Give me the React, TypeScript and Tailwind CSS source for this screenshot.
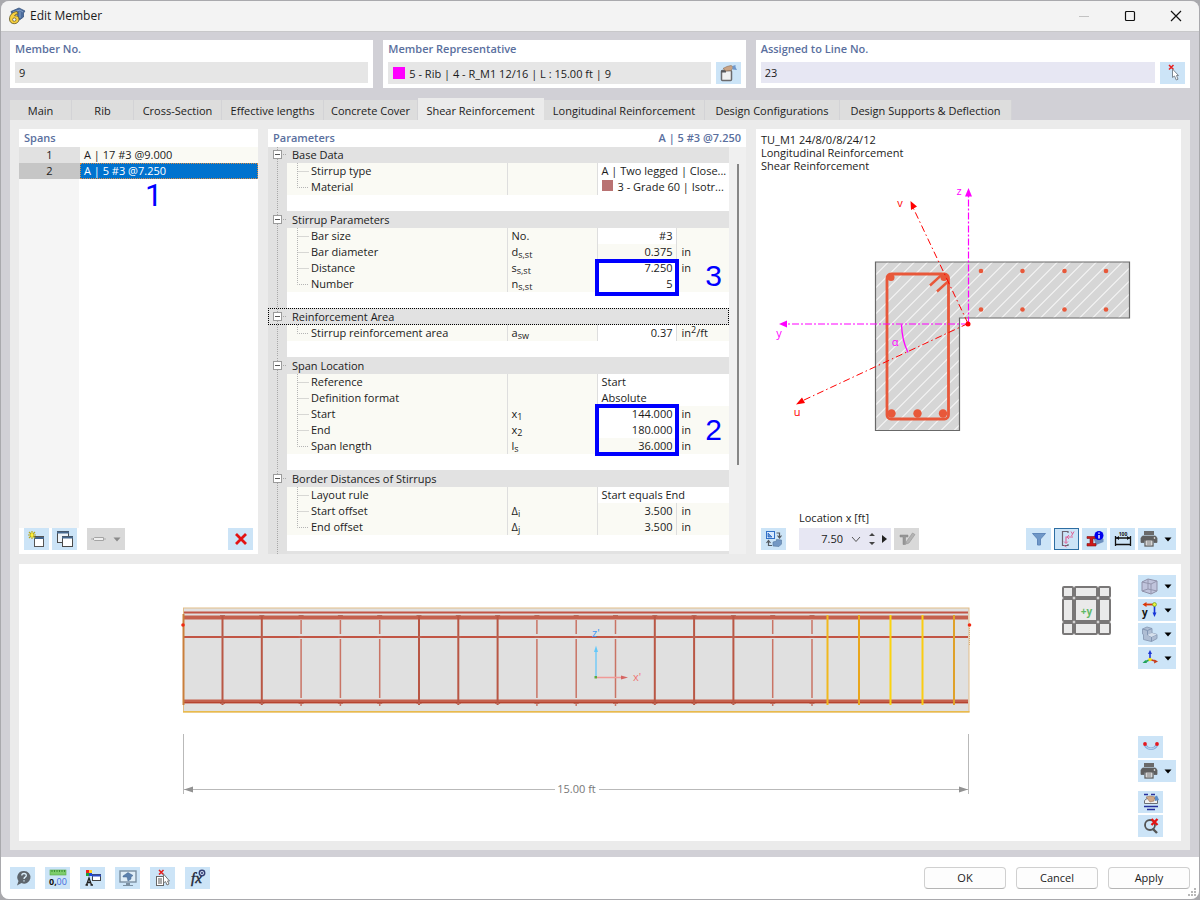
import React from "react";

type Kids = { children?: React.ReactNode };

const Svg = ({ children, w = 20 }: Kids & { w?: number }) => (
  <svg viewBox={`0 0 ${w} 18`} width={w} height={18} fill="none" aria-hidden="true">
    {children}
  </svg>
);

function ToolButton({
  label,
  menu = false,
  tone = "blue",
  children,
}: Kids & { label: string; menu?: boolean; tone?: "blue" | "gray" | "active" }) {
  const tones = {
    blue: "bg-[#cce4f7]",
    gray: "bg-[#d9d9d9]",
    active: "bg-[#cce4f7] outline outline-1 -outline-offset-1 outline-[#2d6ea3]",
  };
  return (
    <button
      type="button"
      aria-label={label}
      className={`flex h-[22px] shrink-0 items-center ${tones[tone]} ${menu ? "w-[38px] justify-between pl-0.5 pr-1" : "w-[25px] justify-center"}`}
    >
      {children}
      {menu && (
        <svg viewBox="0 0 8 5" width="8" height="5" aria-hidden="true">
          <path d="M0.5 0.5H7.5L4 4.5Z" fill={tone === "gray" ? "#8a8a8a" : "#000"} />
        </svg>
      )}
    </button>
  );
}

const AppLogo = () => (
  <svg viewBox="0 0 18 18" width="18" height="18" aria-hidden="true">
    <path d="M3 4.500L11 1L17 4L15.500 6V10L11.500 13L9 7L4 7Z" fill="#4b6c9e" stroke="#38557f" strokeWidth=".8" />
    <path d="M5 5L12 3L15 5M12 4.500V11" stroke="#86a2c8" fill="none" />
    <path d="M9 4.500C4 5 1.500 8.500 1.500 12C1.500 15 3.500 16.700 6.200 16.700C9 16.700 11 14.800 11 12.300C11 9.800 9 8.300 6.500 8.800C7.200 7.500 8.500 7 10 6.800Z" fill="#f7cf3c" stroke="#6e6430" strokeWidth=".9" />
    <circle cx="6.300" cy="12.600" r="1.700" fill="#f3f3f3" stroke="#6e6430" strokeWidth=".8" />
  </svg>
);

const LibraryIcon = () => (
  <Svg>
    <rect x="3.500" y="6.500" width="10" height="10" rx="1" fill="#f1f1f1" stroke="#6b6b6e" strokeWidth="1.500" />
    <path d="M3 7.500H8" stroke="#59595c" strokeWidth="2" />
    <path d="M5 4.500L9 2.500L13 1.500L15.500 3L13 6.500L8 7Z" fill="#c9a384" stroke="#8b6d55" strokeWidth=".6" />
    <path d="M14.500 2L17.500 1V3L19 6L14.500 5.500Z" fill="#6d97cb" />
  </Svg>
);
const PickIcon = () => (
  <Svg>
    <path d="M6 1L10.500 5.500M10.500 1L6 5.500" stroke="#e82020" strokeWidth="1.500" />
    <path d="M9.500 5V13.500L11.500 12L13.300 16L15 15.200L13.500 11.500H15.500Z" fill="#fff" stroke="#7c8791" />
  </Svg>
);
const NewIcon = () => (
  <Svg>
    <rect x="7.500" y="6.500" width="9" height="10" fill="#fff" stroke="#555" />
    <path d="M7 8H17" stroke="#43658d" strokeWidth="2" />
    <path d="M5 1V9M1 5H9M2 2L8 8M8 2L2 8" stroke="#b5a81c" strokeWidth="1.200" />
    <path d="M5 2L6.500 5L5 8L3.500 5Z" fill="#ffef35" />
  </Svg>
);
const CopyIcon = () => (
  <Svg>
    <rect x="2.500" y="1.500" width="11" height="11" fill="#eff5fa" stroke="#4a4a4a" />
    <path d="M2 2.500H14" stroke="#47698f" strokeWidth="2" />
    <rect x="7.500" y="6.500" width="10" height="10" fill="#fff" stroke="#4a4a4a" />
    <path d="M7 7.500H18" stroke="#47698f" strokeWidth="2" />
  </Svg>
);
const LinkIcon = () => (
  <Svg>
    <path d="M2 9H6M14 9H17" stroke="#b0b0b0" strokeWidth="1.200" />
    <path d="M5.500 7.500H14.500V10.500H5.500L4 9Z" fill="#eee" stroke="#a4a4a4" />
  </Svg>
);
const DeleteIcon = () => (
  <Svg>
    <path d="M5 4L15 14M15 4L5 14" stroke="#e31313" strokeWidth="2.800" />
  </Svg>
);
const SwapIcon = () => (
  <Svg>
    <rect x="2.500" y="1.500" width="8" height="7" fill="#d8eaff" stroke="#3170c7" />
    <path d="M4 7V3L8 7Z" fill="#5b8fd6" stroke="#2362bd" strokeWidth=".7" />
    <path d="M12.500 3H15.500V7.500M13.500 5.500L15.500 8L17.500 5.500M8 15.500H4.500V11M2.500 13L4.500 10.500L6.500 13" stroke="#555b62" strokeWidth="1.200" />
    <path d="M9 12L12.500 11V9.500L17.500 10V14L15 16.500L9 16Z" fill="#7498c4" stroke="#55799f" strokeWidth=".6" />
  </Svg>
);
const EditSectionIcon = () => (
  <Svg>
    <path d="M3 5H11V7H8.500V14.500H6V7H3Z" fill="#979797" stroke="#858585" strokeWidth=".5" />
    <path d="M9.500 11.500L15.500 3L18 4.500L12 13L9.500 14Z" fill="#b3b3b3" stroke="#949494" strokeWidth=".6" />
  </Svg>
);
const FilterIcon = () => (
  <Svg>
    <path d="M3.500 3.500H16.500L11.500 9V15H8.500V9Z" fill="#6f97c7" stroke="#5f87ba" />
  </Svg>
);
const SectionAxesIcon = () => (
  <Svg>
    <path d="M11 3V1.500H5.500V15.500H11V14" stroke="#6b6370" strokeWidth="1.200" />
    <path d="M16 7H9V13" stroke="#e0669a" strokeWidth="1.200" />
    <path d="M12 5L10 7L12 9M7 11.500L9 13.500L11 11.500" stroke="#e0669a" />
    <path d="M14 1.500L15.500 4M17 1.500L14.500 6M7 15.500L9.500 17" stroke="#df6296" />
  </Svg>
);
const InfoIcon = () => (
  <Svg>
    <path d="M8 7L13 5L18.500 9V12L11 15Z" fill="#6d8fbf" />
    <path d="M2 6.500H11V8.500H8V13.500H11V16H2V13.500H5V8.500H2Z" fill="#d11818" stroke="#7d1414" strokeWidth=".6" />
    <circle cx="14" cy="5.500" r="4.500" fill="#0000ed" />
    <path d="M14 5V8.500M14 2.500V3.800" stroke="#fff" strokeWidth="1.400" />
  </Svg>
);
const DimensionIcon = () => (
  <Svg>
    <path d="M2.500 6V16M17.500 6V16M2 14.500H18M3 8H17" stroke="#111" strokeWidth="1.300" />
    <path d="M3 8L6 6V10ZM17 8L14 6V10Z" fill="#111" />
    <text x="10" y="5.500" fontSize="5" textAnchor="middle" fill="#111" fontWeight="700">100</text>
  </Svg>
);
const PrintIcon = () => (
  <Svg w={18}>
    <path d="M4 1H14V5H4Z" fill="#6a6a6a" />
    <path d="M2.500 6H15.500L17 8V12.500H14V10H4V12.500H1V8Z" fill="#5f5f5f" stroke="#5f5f5f" strokeWidth=".8" />
    <rect x="5" y="10" width="8" height="6" fill="#fff" stroke="#5f5f5f" strokeWidth="1.300" />
    <path d="M6.500 12H11.500M6.500 14H11.500" stroke="#5f5f5f" />
    <circle cx="14.500" cy="8" r=".8" fill="#fff" />
  </Svg>
);
const CubeIcon = () => (
  <Svg>
    <path d="M2 5L8 2L17 4V14L11 17L2 14Z" fill="#c0c4dc" stroke="#8f90a8" />
    <path d="M2 5L11 7L17 4M11 7V17M8 2V12L2 14M8 12L17 14" stroke="#9496ae" />
  </Svg>
);
const AxisYIcon = () => (
  <Svg>
    <path d="M6 3.500H13" stroke="#db3708" strokeWidth="1.800" />
    <path d="M2.500 3.500L6.500 1V6Z" fill="#db3708" />
    <path d="M14.500 5V12" stroke="#1635d8" strokeWidth="1.600" />
    <path d="M12.500 11.500L14.500 16L16.500 11.500Z" fill="#1635d8" />
    <circle cx="14.500" cy="3.500" r="1.900" fill="#eef43c" stroke="#6ca522" strokeWidth=".8" />
    <text x="2" y="15" fontSize="10" fontWeight="700" fill="#111">y</text>
  </Svg>
);
const StepsIcon = () => (
  <Svg>
    <path d="M2.500 4L7 2L12 3.500V8L17 9.500V13.500L11.500 16.500L3.500 14.500V9.500L2.500 9Z" fill="#aebdd3" stroke="#8ea0ba" />
    <path d="M2.500 4L7.500 5.500L12 3.500M7.500 5.500V10L11.500 12L17 9.500M11.500 12V16.500" stroke="#8296b3" />
    <path d="M7.500 10L12 8L17 9.500L11.500 12Z" fill="#d6e0ec" />
  </Svg>
);
const TriadIcon = () => (
  <Svg>
    <path d="M10 10V4" stroke="#1c36d2" strokeWidth="1.600" />
    <path d="M8 5L10 1L12 5Z" fill="#1c36d2" />
    <path d="M10 10.500L6 12.500" stroke="#21a35b" strokeWidth="1.600" />
    <path d="M2.500 14L5.500 11L7 14Z" fill="#21a35b" />
    <path d="M10 10.500L15 12" stroke="#c83c1c" strokeWidth="1.600" />
    <path d="M18 12.500L14 14.500L14.500 10.500Z" fill="#c83c1c" />
    <circle cx="10" cy="10.500" r="1.800" fill="#f2e516" />
  </Svg>
);
const CurveIcon = () => (
  <Svg>
    <path d="M4 7C7 12 13 12 16 7" stroke="#85addb" strokeWidth="2.600" />
    <path d="M4 7C7 12 13 12 16 7" stroke="#c4dcf3" />
    <circle cx="4" cy="6" r="1.900" fill="#e5181f" />
    <circle cx="16" cy="6" r="1.900" fill="#e5181f" />
  </Svg>
);
const LayersIcon = () => (
  <Svg>
    <path d="M3 1.500H7M10 1.500H14M3 13.500H17M6 16.500H14" stroke="#26309c" strokeWidth="1.500" />
    <path d="M3.500 10.500V7.500L6 5.500H16.500V10.500Z" fill="#f1f1f1" stroke="#6a6f75" />
    <path d="M5 4L9 3L14 4L13 8L9 9Z" fill="#cfa98a" stroke="#8e6b51" strokeWidth=".5" />
    <path d="M14 3.500L16 2.500L18 7L14 8Z" fill="#5a8cc8" />
  </Svg>
);
const ZoomResetIcon = () => (
  <Svg>
    <circle cx="9" cy="8" r="5" stroke="#555" strokeWidth="1.800" />
    <path d="M11.500 11.500L16 16" stroke="#555" strokeWidth="2.400" />
    <path d="M10.500 2L16.500 8M16.500 2L10.500 8" stroke="#e31414" strokeWidth="2.400" />
  </Svg>
);
const HelpIcon = () => (
  <Svg>
    <path d="M11 2A6.300 6.300 0 1 1 8.500 14L4 16.500L5.500 12A6.300 6.300 0 0 1 11 2Z" fill="#5d656c" />
    <path d="M8.800 6.500C8.800 3.800 13.300 3.800 13.300 6.500C13.300 8.300 11 8 11 10M11 11.200V12.500" stroke="#d9edf9" strokeWidth="1.300" />
  </Svg>
);
const UnitsIcon = () => (
  <Svg>
    <rect x="2" y="1" width="16" height="5" fill="#7dcd6b" stroke="#55a948" strokeWidth=".6" />
    <path d="M4 1V3M6.500 1V3M9 1V3M11.500 1V3M14 1V3M16.500 1V3" stroke="#3d8e35" />
    <text x="1" y="16" fontSize="9" fill="#111" fontWeight="700">0,</text>
    <text x="8.500" y="16" fontSize="9" fill="#3e6bdc">00</text>
  </Svg>
);
const ColorsIcon = () => (
  <Svg>
    <path d="M3 1H6V4H3Z" fill="#e22" />
    <path d="M6 1H9V4H6Z" fill="#ffd21d" />
    <path d="M3 4H6V7H3Z" fill="#1e9f38" />
    <path d="M6 4H9V7H6Z" fill="#1d45d6" />
    <path d="M3.500 16L6 9L8.500 16M4.500 13.500H7.500M2.500 16H5M7.500 16H10" stroke="#222" strokeWidth="1.300" />
    <rect x="9.500" y="5.500" width="8" height="6" fill="#fff" stroke="#444" />
    <path d="M9 6.500H18" stroke="#2b4bc4" strokeWidth="2" />
  </Svg>
);
const ScreenIcon = () => (
  <Svg>
    <rect x="2" y="2" width="16" height="11" fill="#dfedf7" stroke="#7b8fa1" strokeWidth="1.400" />
    <path d="M8 14H12V16H15V17H5V16H8Z" fill="#7b8fa1" />
    <path d="M5 7L10 3.500L15 6.500L13 8V10L10 12L9 8H5Z" fill="#5c81ae" stroke="#45678f" strokeWidth=".5" />
  </Svg>
);
const ListPickIcon = () => (
  <Svg>
    <rect x="3.500" y="7.500" width="7" height="9" fill="#fff" stroke="#666" />
    <path d="M5 10H9M5 12H9M5 14H9" stroke="#555" />
    <path d="M6 1L10.500 5.500M10.500 1L6 5.500" stroke="#e31b1b" strokeWidth="1.500" />
    <path d="M10.500 5V14L12.500 12.500L14 16L16 15L14.500 12H16.500Z" fill="#fff" stroke="#777" />
  </Svg>
);
const FormulaIcon = () => (
  <Svg>
    <text x="3" y="14" fontSize="15" fontStyle="italic" fontFamily="Liberation Serif" fill="#1c2636" stroke="#1c2636" strokeWidth=".4">fx</text>
    <circle cx="14" cy="4" r="2.700" fill="#dce6fa" stroke="#343f73" strokeWidth="1.500" />
    <circle cx="14" cy="4" r="1.100" fill="#343f73" />
  </Svg>
);

const Heading = ({ children }: Kids) => <h2 className="font-semibold text-[#5a6f9e]">{children}</h2>;

const tabs = [
  { name: "Main", width: "w-[62px]" },
  { name: "Rib", width: "w-[62px]" },
  { name: "Cross-Section", width: "w-[88px]" },
  { name: "Effective lengths", width: "w-[102px]" },
  { name: "Concrete Cover", width: "w-[94px]" },
  { name: "Shear Reinforcement", width: "w-[126px]" },
  { name: "Longitudinal Reinforcement", width: "w-[161px]" },
  { name: "Design Configurations", width: "w-[135px]" },
  { name: "Design Supports & Deflection", width: "w-[172px]" },
];

type Row = {
  name: string;
  base?: string;
  sub?: string;
  value: string;
  unit?: React.ReactNode;
  wide?: boolean;
  editable?: boolean;
  swatch?: boolean;
};

const sections: { title: string; focused?: boolean; rows: Row[] }[] = [
  {
    title: "Base Data",
    rows: [
      { name: "Stirrup type", value: "A | Two legged | Close...", wide: true },
      { name: "Material", value: "3 - Grade 60 | Isotr...", wide: true, swatch: true },
    ],
  },
  {
    title: "Stirrup Parameters",
    rows: [
      { name: "Bar size", base: "No.", value: "#3", editable: true },
      { name: "Bar diameter", base: "d", sub: "s,st", value: "0.375", unit: "in" },
      { name: "Distance", base: "s", sub: "s,st", value: "7.250", unit: "in", editable: true },
      { name: "Number", base: "n", sub: "s,st", value: "5", editable: true },
    ],
  },
  {
    title: "Reinforcement Area",
    focused: true,
    rows: [
      {
        name: "Stirrup reinforcement area", base: "a", sub: "sw", value: "0.37", editable: true,
        unit: <>in<sup className="text-[9px]">2</sup>/ft</>,
      },
    ],
  },
  {
    title: "Span Location",
    rows: [
      { name: "Reference", value: "Start", wide: true },
      { name: "Definition format", value: "Absolute", wide: true },
      { name: "Start", base: "x", sub: "1", value: "144.000", unit: "in", editable: true },
      { name: "End", base: "x", sub: "2", value: "180.000", unit: "in", editable: true },
      { name: "Span length", base: "l", sub: "s", value: "36.000", unit: "in" },
    ],
  },
  {
    title: "Border Distances of Stirrups",
    rows: [
      { name: "Layout rule", value: "Start equals End", wide: true },
      { name: "Start offset", base: "Δ", sub: "i", value: "3.500", unit: "in" },
      { name: "End offset", base: "Δ", sub: "j", value: "3.500", unit: "in" },
    ],
  },
];

function Branch({ last }: { last: boolean }) {
  return (
    <svg width="24" height="16" className="shrink-0" aria-hidden="true">
      <path d={last ? "M10.5 0V8.5H22" : "M10.5 0V16M10.5 8.500H22"} stroke="#b4b4b4" strokeDasharray="1 1" fill="none" />
    </svg>
  );
}

function Gutter({ toggle = false }: { toggle?: boolean }) {
  return (
    <td className="bg-[#e1e1e1] p-0">
      <svg width="19" height="16" className="block" aria-hidden="true">
        <path d="M9.500 0V16" stroke="#a8a8a8" strokeDasharray="1 1" />
        {toggle && (
          <>
            <rect x="5.500" y="3.500" width="8" height="8" fill="#fff" stroke="#9b9b9b" />
            <path d="M7 7.500H12" stroke="#555" />
            <path d="M15 7.500H19" stroke="#a8a8a8" strokeDasharray="1 1" />
          </>
        )}
      </svg>
    </td>
  );
}

function ParameterTable() {
  return (
    <table className="w-full table-fixed border-collapse">
      <colgroup>
        <col className="w-[19px]" />
        <col />
        <col className="w-[90px]" />
        <col className="w-[79px]" />
        <col className="w-[53px]" />
      </colgroup>
      {sections.map((s, n) => (
        <tbody key={s.title}>
          <tr
            className={`bg-[#e2e2e2] ${n === 0 ? "h-4" : "h-[17px]"} ${s.focused ? "outline-1 -outline-offset-1 outline-dotted outline-black" : ""}`}
          >
            <Gutter toggle />
            <th colSpan={4} scope="rowgroup" className="p-0 pl-[5px] text-left font-medium">{s.title}</th>
          </tr>
          {s.rows.map((r, i) => (
            <tr key={r.name} className="h-4 bg-[#fafaf4]">
              <Gutter />
              <td className="p-0">
                <div className="flex h-4 items-center"><Branch last={i === s.rows.length - 1} />{r.name}</div>
              </td>
              <td className="border-l border-[#dedede] p-0 pl-1">
                {r.base}
                {r.sub && <sub className="text-[9px]">{r.sub}</sub>}
              </td>
              {r.wide ? (
                <td colSpan={2} className="whitespace-nowrap border-l border-[#dedede] bg-white p-0 pl-1">
                  {r.swatch && <span className="mr-[5px] inline-block size-[11px] bg-[#b97272]" />}
                  {r.value}
                </td>
              ) : (
                <>
                  <td className={`border-l border-[#dedede] p-0 pr-[3px] text-right ${r.editable ? "bg-white" : ""}`}>{r.value}</td>
                  <td className="border-l border-[#dedede] p-0 pl-[5px]">{r.unit}</td>
                </>
              )}
            </tr>
          ))}
          <tr className="h-4"><Gutter /><td colSpan={4} className="p-0" /></tr>
        </tbody>
      ))}
      <tbody>
        <tr className="h-4 bg-[#e2e2e2]"><Gutter /><td colSpan={4} className="p-0" /></tr>
      </tbody>
    </table>
  );
}

function SectionDrawing() {
  return (
    <svg viewBox="756 173 425 335" className="min-h-0 w-full flex-1" role="img" aria-label="Cross-section with reinforcement">
      <defs>
        <clipPath id="concrete">
          <path d="M875.5 261.500H1129.500V317.500H959.500V430H875.500Z" />
        </clipPath>
      </defs>
      <path d="M875.5 261.500H1129.500V317.500H959.500V430H875.500Z" fill="#d6d6d6" />
      <g clipPath="url(#concrete)" stroke="#f6f6f6" strokeWidth="1.100">
        {Array.from({ length: 36 }, (_, i) => 890 + i * 13).map((x) => (
          <path key={x} d={`M${x} 260L${x - 172} 432`} />
        ))}
      </g>
      <path d="M875.5 261.500H1129.500V317.500H959.500V430H875.500Z" fill="none" stroke="#686868" strokeWidth="1.200" />
      <g stroke="#e8583a" fill="none">
        <rect x="887" y="273.500" width="61.500" height="145" rx="4" strokeWidth="2.800" />
        <path d="M930 285L942 274M937 291L948 281" strokeWidth="2.400" />
      </g>
      <g fill="#e8583a">
        {[[891, 277], [944, 277], [891.5, 413], [917.5, 413], [943, 413]].map(([x, y]) => (
          <circle key={`${x}-${y}`} cx={x} cy={y} r={y > 300 ? 4.200 : 3.500} />
        ))}
        {[981, 1022.5, 1064.5, 1106].map((x) => (
          <React.Fragment key={x}><circle cx={x} cy="270.500" r="2.300" /><circle cx={x} cy="309" r="2.300" /></React.Fragment>
        ))}
      </g>
      <g stroke="#ff00ff" strokeWidth="1.200" fill="none">
        <path d="M968.5 323V195M968 323.500H786" strokeDasharray="7 2 2 2" />
        <path d="M901.500 324Q902 340 908 352" strokeWidth="1.300" />
      </g>
      <path d="M968.500 187.500L965 196H972ZM779 323.500L787 320V327Z" fill="#f0f" />
      <path d="M968 323L913 207M968 323L803 400" stroke="#f00" strokeDasharray="7 3 1.500 3" />
      <path d="M910.500 200.500L917 206L911 209.500ZM796 404L802 397L805 402.500Z" fill="#f00" />
      <circle cx="968" cy="323.500" r="2.500" fill="#f00" />
      <g fontSize="11" textAnchor="middle" fontWeight="500">
        <text x="959" y="194" fill="#f0f">z</text>
        <text x="779" y="336" fill="#f0f">y</text>
        <text x="895" y="345" fill="#f0f">α</text>
        <text x="900" y="206" fill="#f00">v</text>
        <text x="797" y="415" fill="#f00">u</text>
      </g>
    </svg>
  );
}

const stirrups = Array.from({ length: 16 }, (_, i) => ({
  x: 222.5 + i * 39.3,
  front: [0, 1, 5, 6, 7, 11, 12, 13].includes(i),
}));
const selectedStirrups = [
  { x: 827.5, color: "#f1b81f" },
  { x: 859, color: "#e9a61c" },
  { x: 890.5, color: "#fbd310" },
  { x: 922.5, color: "#fbcc13" },
  { x: 954, color: "#dfa12a" },
];

function BeamDrawing() {
  return (
    <svg viewBox="19 564 1031 277" className="h-full min-w-0 flex-1" role="img" aria-label="Side view of the rib, 15.00 ft">
      <rect x="183.500" y="608" width="785.500" height="104" fill="#e0e0e0" stroke="#e2bd88" />
      <path d="M183 711.800H969.500" stroke="#e9bb4c" strokeWidth="1.500" />
      <path d="M184 612.500H968M184 637H968" stroke="#c25545" strokeWidth="2" />
      <path d="M184 617.500H968M184 701.500H968" stroke="#c4604d" strokeWidth="3.800" />
      <path d="M184 702.500H968" stroke="#b5432f" strokeWidth="1.200" />
      <path d="M183.500 614V705" stroke="#ca7f3b" strokeWidth="2" />
      {stirrups.map(({ x, front }) => (
        <g key={x}>
          {front ? (
            <path d={`M${x} 615V705`} stroke="#b95745" strokeWidth="2" />
          ) : (
            <path d={`M${x} 620V634M${x} 639V698M${x} 703V706`} stroke="#c97465" strokeWidth="1.500" />
          )}
          <path d={`M${x - 2.5} 637H${x + 2.5}M${x - 2.5} 615.500H${x + 2.5}M${x - 2.5} 703.500H${x + 2.5}`} stroke="#b96a5c" />
        </g>
      ))}
      {selectedStirrups.map(({ x, color }) => (
        <path key={x} d={`M${x} 615V705`} stroke={color} strokeWidth="2" />
      ))}
      <circle cx="183" cy="625" r="1.800" fill="#f02a13" />
      <circle cx="969.500" cy="625" r="1.800" fill="#f02a13" />
      <path d="M969.500 628V645" stroke="#d9ae78" strokeDasharray="1 1" />
      <path d="M596 677V651" stroke="#76cbf7" strokeWidth="1.500" />
      <path d="M594 652L596 645.500L598 652Z" fill="#62c8fa" />
      <path d="M597 677.500H623" stroke="#f19a97" strokeWidth="1.500" />
      <path d="M621 675.500L628 677.500L621 679.500Z" fill="#d56562" />
      <rect x="594.500" y="676" width="2.500" height="2.500" fill="#5eaa3f" />
      <text x="592" y="637" fontSize="11" fill="#4096f4">z'</text>
      <text x="633" y="681" fontSize="11" fill="#ef7772">x'</text>
      <path d="M183.500 734V794M968.500 734V794M184 789.500H555M599 789.500H968" stroke="#b9b9b9" />
      <path d="M184 789.500L193 786.500V792.500ZM968 789.500L959 786.500V792.500Z" fill="#929292" />
      <text x="576.500" y="793" fontSize="11" textAnchor="middle" fill="#777" fontWeight="500">15.00 ft</text>
    </svg>
  );
}

function ViewCube() {
  const spans = [[1, 10], [13, 22], [37, 11]];
  return (
    <svg viewBox="0 0 49 49" width="49" height="49" className="mt-[22px] shrink-0" role="img" aria-label="View direction +y">
      {spans.map(([y, h]) => spans.map(([x, w]) => (
        <rect key={`${x}-${y}`} x={x} y={y} width={w} height={h} rx="1" fill="#eaeaea" stroke="#797777" strokeWidth="2" />
      )))}
      <text x="24.500" y="29" fontSize="10" fontWeight="700" textAnchor="middle" fill="#5fb865">+y</text>
    </svg>
  );
}

const Callout = ({ children }: Kids) => (
  <span className="block font-['Liberation_Sans',sans-serif] text-[30px] leading-[30px] text-[#0000ff]">{children}</span>
);

const panel = "h-12 bg-white px-[5px] pt-px";
const panelLabel = "block h-[21px] font-semibold text-[#5a6f9e]";
const field = "h-[21px] w-full min-w-0 flex-1 bg-[#e6e6e6] px-1 outline-none";
const dialogButton =
  "h-[22px] w-[82px] rounded-[4px] border border-[#d0d0d0] border-b-[#b5b5b5] bg-[#fdfdfd] font-medium";

export default function App() {
  return (
    <div className="flex min-h-screen flex-col bg-[#a9a9ad] px-px pb-0.5 pt-px font-['Open_Sans','Noto_Sans',sans-serif] text-[11px] leading-4 text-[#1b1b1b]">
      <div className="flex flex-1 flex-col overflow-hidden rounded-lg bg-[#d1d0d6]">
        <header className="flex h-[31px] items-center border-b border-[#c8c8ca] bg-[#f3f3f3] pl-[7px]">
          <AppLogo />
          <h1 className="ml-1 flex-1 text-xs">Edit Member</h1>
          <button type="button" aria-label="Minimize" className="flex w-[46px] justify-center">
            <svg width="12" height="12"><path d="M1 6.500H11" stroke="#c2c2c2" /></svg>
          </button>
          <button type="button" aria-label="Maximize" className="flex w-[46px] justify-center">
            <svg width="12" height="12"><rect x="1.500" y="1.500" width="9" height="9" rx="1" fill="none" stroke="#111" strokeWidth="1.200" /></svg>
          </button>
          <button type="button" aria-label="Close" className="flex w-[46px] justify-center">
            <svg width="12" height="12"><path d="M1 1L11 11M11 1L1 11" stroke="#111" strokeWidth="1.200" /></svg>
          </button>
        </header>

        <main className="flex flex-1 flex-col px-[9px] pb-[7px] pt-2">
          <div className="grid grid-cols-[363fr_362fr_434fr] gap-2.5">
            <section className={panel}>
              <label htmlFor="member" className={panelLabel}>Member No.</label>
              <div className="flex"><input id="member" readOnly defaultValue="9" className={field} /></div>
            </section>
            <section className={panel}>
              <label htmlFor="rep" className={panelLabel}>Member Representative</label>
              <div className="flex gap-[5px]">
                <div className="flex min-w-0 flex-1 items-center bg-[#e6e6e6] pl-[5px]">
                  <span className="size-3 bg-[#ff00ff]" />
                  <input id="rep" readOnly defaultValue="5 - Rib | 4 - R_M1 12/16 | L : 15.00 ft | 9" className={field} />
                </div>
                <ToolButton label="Edit representative"><LibraryIcon /></ToolButton>
              </div>
            </section>
            <section className={panel}>
              <label htmlFor="line" className={panelLabel}>Assigned to Line No.</label>
              <div className="flex gap-[5px]">
                <input id="line" defaultValue="23" className="h-[21px] w-full min-w-0 flex-1 bg-[#e7e7f3] px-1 outline-none" />
                <ToolButton label="Pick line"><PickIcon /></ToolButton>
              </div>
            </section>
          </div>

          <div role="tablist" className="mt-2.5 flex h-[22px] items-end">
            {tabs.map(({ name, width }) => (
              <button
                key={name}
                type="button"
                role="tab"
                aria-selected={name === "Shear Reinforcement"}
                className={`whitespace-nowrap border-r font-medium ${width} ${name === "Shear Reinforcement" ? "h-[22px] border-[#ebebeb] bg-[#ebebeb] pt-1" : "h-5 border-[#d3d3d6] bg-[#dddddd] pt-0.5"}`}
              >
                {name}
              </button>
            ))}
          </div>

          <div className="flex flex-1 flex-col gap-2.5 bg-[#ebebeb] p-[9px]">
            <div className="grid h-[425px] grid-cols-[239fr_478fr_425fr] gap-2.5">
              <section className="relative flex flex-col bg-[linear-gradient(to_right,#f5f5f5_60px,#ffffff_60px)]">
                <div className="h-[18px] bg-white pl-[5px] pt-px"><Heading>Spans</Heading></div>
                <table className="w-full table-fixed border-collapse">
                  <colgroup><col className="w-[61px]" /><col /></colgroup>
                  <tbody>
                    <tr className="h-4">
                      <th scope="row" className="bg-[#e1e1e1] p-0 font-medium">1</th>
                      <td className="bg-[#fafaf4] p-0 pl-1">A | 17 #3 @9.000</td>
                    </tr>
                    <tr className="h-4">
                      <th scope="row" className="bg-[#c6c6c6] p-0 font-medium">2</th>
                      <td className="bg-[#0072ce] p-0 pl-1 text-white outline-1 -outline-offset-1 outline-dotted outline-[#d98b45]">A | 5 #3 @7.250</td>
                    </tr>
                  </tbody>
                </table>
                <div className="absolute left-[126px] top-[52px]">
                  <span className="block font-['Roboto',sans-serif] text-[31px] leading-[30px] text-[#0000ff]">1</span>
                </div>
                <div className="mt-auto flex items-center gap-[3px] bg-white px-[5px] pb-1">
                  <ToolButton label="New span"><NewIcon /></ToolButton>
                  <ToolButton label="Copy span"><CopyIcon /></ToolButton>
                  <span className="ml-[7px]"><ToolButton label="Connect" menu tone="gray"><LinkIcon /></ToolButton></span>
                  <span className="ml-auto"><ToolButton label="Delete span"><DeleteIcon /></ToolButton></span>
                </div>
              </section>

              <section className="relative flex min-h-0 flex-col bg-white">
                <div className="flex h-[18px] shrink-0 justify-between px-[5px] pt-px">
                  <Heading>Parameters</Heading>
                  <Heading>A | 5 #3 @7.250</Heading>
                </div>
                <div className="flex min-h-0 flex-1 overflow-hidden">
                  <div className="min-w-0 flex-1"><ParameterTable /></div>
                  <div className="w-[17px] bg-[#f0f0f0] pl-2 pt-[17px]"><div className="h-[301px] w-0.5 bg-[#868686]" /></div>
                </div>
                <div className="absolute right-[67px] top-[130px] h-[37px] w-[84px] border-4 border-[#0000ff]" />
                <div className="absolute right-[67px] top-[275px] h-[52px] w-[84px] border-4 border-[#0000ff]" />
                <div className="absolute right-6 top-[132px]"><Callout>3</Callout></div>
                <div className="absolute right-6 top-[286px]"><Callout>2</Callout></div>
              </section>

              <section className="flex min-h-0 flex-col bg-white">
                <div className="px-[5px] pt-1 leading-[13px]">
                  <p>TU_M1 24/8/0/8/24/12</p>
                  <p>Longitudinal Reinforcement</p>
                  <p>Shear Reinforcement</p>
                </div>
                <SectionDrawing />
                <div className="flex items-end gap-[3px] px-[5px] pb-1">
                  <ToolButton label="Swap view"><SwapIcon /></ToolButton>
                  <div className="ml-2.5">
                    <label htmlFor="location" className="mb-0.5 block">Location x [ft]</label>
                    <div className="flex h-[22px] w-[92px] items-center bg-[#e7e7f3]">
                      <input id="location" defaultValue="7.50" className="w-11 bg-transparent text-right outline-none" />
                      <button type="button" aria-label="Show values" className="ml-2">
                        <svg width="10" height="7" className="block"><path d="M1 1L5 5.500L9 1" fill="none" stroke="#555" /></svg>
                      </button>
                      <button type="button" aria-label="Step value" className="ml-2">
                        <svg width="6" height="14" className="block"><path d="M0 4L3 1L6 4ZM0 10L3 13L6 10Z" fill="#444" /></svg>
                      </button>
                      <button type="button" aria-label="Next location" className="ml-[7px]">
                        <svg width="5" height="8" className="block"><path d="M0 0L5 4L0 8Z" fill="#222" /></svg>
                      </button>
                    </div>
                  </div>
                  <ToolButton label="Edit section" tone="gray"><EditSectionIcon /></ToolButton>
                  <span className="flex-1" />
                  <ToolButton label="Filter"><FilterIcon /></ToolButton>
                  <ToolButton label="Section axes" tone="active"><SectionAxesIcon /></ToolButton>
                  <ToolButton label="Section info"><InfoIcon /></ToolButton>
                  <ToolButton label="Dimensions"><DimensionIcon /></ToolButton>
                  <ToolButton label="Print" menu><PrintIcon /></ToolButton>
                </div>
              </section>
            </div>

            <section className="flex min-h-[277px] flex-1 bg-white pr-[5px]">
              <BeamDrawing />
              <div className="flex shrink-0 gap-[27px] pl-3">
                <ViewCube />
                <div className="flex flex-col gap-0.5 pb-1 pt-[11px]">
                  <ToolButton label="Isometric view" menu><CubeIcon /></ToolButton>
                  <ToolButton label="View along y" menu><AxisYIcon /></ToolButton>
                  <ToolButton label="Display mode" menu><StepsIcon /></ToolButton>
                  <ToolButton label="Coordinate system" menu><TriadIcon /></ToolButton>
                  <span className="flex-1" />
                  <ToolButton label="Deformation"><CurveIcon /></ToolButton>
                  <ToolButton label="Print view" menu><PrintIcon /></ToolButton>
                  <span className="h-[5px]" />
                  <ToolButton label="Layers"><LayersIcon /></ToolButton>
                  <ToolButton label="Reset zoom"><ZoomResetIcon /></ToolButton>
                </div>
              </div>
            </section>
          </div>
        </main>

        <footer className="relative flex h-[42px] items-center gap-2.5 bg-white px-[9px]">
          <ToolButton label="Help"><HelpIcon /></ToolButton>
          <ToolButton label="Units"><UnitsIcon /></ToolButton>
          <ToolButton label="Colors"><ColorsIcon /></ToolButton>
          <ToolButton label="Display"><ScreenIcon /></ToolButton>
          <ToolButton label="Select from list"><ListPickIcon /></ToolButton>
          <ToolButton label="Formula"><FormulaIcon /></ToolButton>
          <span className="flex-1" />
          <button type="button" className={dialogButton}>OK</button>
          <button type="button" className={dialogButton}>Cancel</button>
          <button type="button" className={dialogButton}>Apply</button>
          <svg width="9" height="9" className="absolute bottom-0.5 right-0.5" aria-hidden="true">
            <path d="M6 0H8V2H6ZM3 3H5V5H3ZM6 3H8V5H6ZM0 6H2V8H0ZM3 6H5V8H3ZM6 6H8V8H6Z" fill="#b8b8b8" />
          </svg>
        </footer>
      </div>
    </div>
  );
}
